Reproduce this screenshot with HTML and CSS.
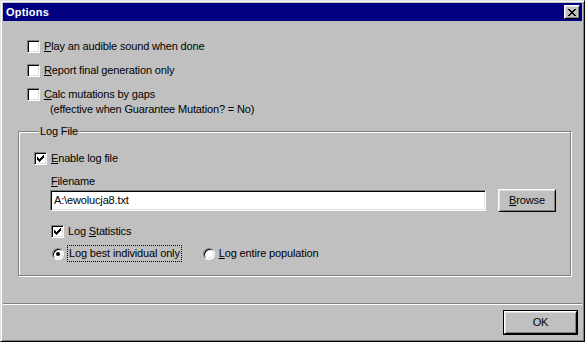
FILE: index.html
```html
<!doctype html>
<html lang="en">
<head>
    <meta charset="utf-8">
    <title>Options</title>
    <link rel="stylesheet" href="styles.css">
</head>
<body>
    <div class="window">
        <div class="titlebar">
            <span class="title">Options</span>
            <button class="close" type="button">
                <svg width="8" height="7" viewBox="0 0 8 7" shape-rendering="crispEdges">
                    <path d="M0 0h2v1H0zM6 0h2v1H6zM1 1h2v1H1zM5 1h2v1H5zM2 2h4v1H2zM3 3h2v1H3zM2 4h4v1H2zM1 5h2v1H1zM5 5h2v1H5zM0 6h2v1H0zM6 6h2v1H6z" fill="#000"/>
                </svg>
            </button>
        </div>

        <div class="content">
            <div class="options">
                <div class="check-row">
                    <span class="box"></span>
                    <span><u>P</u>lay an audible sound when done</span>
                </div>
                <div class="check-row">
                    <span class="box"></span>
                    <span><u>R</u>eport final generation only</span>
                </div>
                <div class="check-row">
                    <span class="box"></span>
                    <span><u>C</u>alc mutations by gaps</span>
                </div>
                <div class="note">(effective when Guarantee Mutation? = No)</div>
            </div>

            <div class="group">
                <div class="group-title">Log File</div>
                <div class="check-row">
                    <span class="box checked">
                        <svg width="7" height="7" viewBox="0 0 7 7" shape-rendering="crispEdges">
                            <path d="M6 0h1v1H6zM5 1h2v1H5zM0 2h1v1H0zM4 2h3v1H4zM0 3h2v1H0zM3 3h3v1H3zM0 4h5v1H0zM1 5h3v1H1zM2 6h1v1H2z" fill="#000"/>
                        </svg>
                    </span>
                    <span><u>E</u>nable log file</span>
                </div>
                <div class="file">
                    <div class="file-label"><u>F</u>ilename</div>
                    <div class="file-row">
                        <div class="edit">A:\ewolucja8.txt</div>
                        <button class="btn browse" type="button"><u>B</u>rowse</button>
                    </div>
                    <div class="check-row stats">
                        <span class="box checked">
                            <svg width="7" height="7" viewBox="0 0 7 7" shape-rendering="crispEdges">
                                <path d="M6 0h1v1H6zM5 1h2v1H5zM0 2h1v1H0zM4 2h3v1H4zM0 3h2v1H0zM3 3h3v1H3zM0 4h5v1H0zM1 5h3v1H1zM2 6h1v1H2z" fill="#000"/>
                            </svg>
                        </span>
                        <span>Log <u>S</u>tatistics</span>
                    </div>
                    <div class="radio-row">
                        <div class="radio-item first">
                            <span class="radio on"></span>
                            <span class="focus">Log best individual only</span>
                        </div>
                        <div class="radio-item">
                            <span class="radio"></span>
                            <span><u>L</u>og entire population</span>
                        </div>
                    </div>
                </div>
            </div>
        </div>

        <div class="separator"></div>

        <div class="footer">
            <button class="btn ok" type="button">OK</button>
        </div>
    </div>
</body>
</html>
```

FILE: styles.css
```css
* {
    box-sizing: border-box;
}
body {
    margin: 0;
    font-family: "Liberation Sans", Arial, sans-serif;
    font-size: 11px;
    line-height: 13px;
    letter-spacing: -0.15px;
    color: #000;
    background: #c0c0c0;
}
u {
    text-decoration: underline;
    text-underline-offset: 1px;
}
.window {
    width: 585px;
    height: 342px;
    background: #c0c0c0;
    border: 1px solid;
    border-color: #dfdfdf #000 #000 #dfdfdf;
    box-shadow: inset 1px 1px #fff, inset -1px -1px #808080;
    padding: 2px;
    display: flex;
    flex-direction: column;
}
.titlebar {
    height: 18px;
    background: #000080;
    display: flex;
    align-items: center;
    justify-content: space-between;
    padding: 0 2px 0 3px;
}
.title {
    color: #fff;
    font-weight: bold;
    font-size: 11px;
    letter-spacing: 0.2px;
}
.close {
    width: 16px;
    height: 14px;
    padding: 0;
    margin: 0;
    background: #c0c0c0;
    border: 1px solid;
    border-color: #fff #000 #000 #fff;
    box-shadow: inset 1px 1px #dfdfdf, inset -1px -1px #808080;
    display: flex;
    align-items: center;
    justify-content: center;
}
.close svg {
    display: block;
    margin-left: -1px;
}
.content {
    padding: 0 11px 0 15px;
}
.options {
    margin: 19px 0 0 9px;
    display: flex;
    flex-direction: column;
    gap: 11px;
}
.check-row {
    display: flex;
    align-items: center;
    gap: 4px;
    height: 13px;
}
.box {
    width: 13px;
    height: 13px;
    flex: none;
    background: #fff;
    border: 1px solid;
    border-color: #808080 #fff #fff #808080;
    box-shadow: inset 1px 1px #000, inset -1px -1px #dfdfdf;
    display: flex;
    align-items: center;
    justify-content: center;
}
.box svg {
    display: block;
}
.note {
    margin: -9px 0 0 23px;
}
.group {
    margin-top: 15px;
    border: 1px solid #808080;
    box-shadow: inset 1px 1px #fff, 1px 1px #fff;
    padding: 0 14px 14px 15px;
}
.group-title {
    width: fit-content;
    margin: -7px 0 0 5px;
    padding: 0 1px;
    background: #c0c0c0;
}
.group .check-row {
    margin-top: 14px;
}
.file {
    padding-left: 16px;
}
.file-label {
    margin-top: 10px;
    padding-left: 1px;
}
.file-row {
    margin-top: 1px;
    display: flex;
    align-items: center;
    gap: 12px;
}
.edit {
    flex: 1;
    height: 21px;
    background: #fff;
    border: 1px solid;
    border-color: #808080 #fff #fff #808080;
    box-shadow: inset 1px 1px #000, inset -1px -1px #dfdfdf;
    padding: 3px 0 0 3px;
}
.btn {
    font-family: inherit;
    font-size: 11px;
    line-height: 13px;
    letter-spacing: -0.15px;
    color: #000;
    background: #c0c0c0;
    border: 1px solid;
    border-color: #fff #000 #000 #fff;
    box-shadow: inset 1px 1px #dfdfdf, inset -1px -1px #808080;
    padding: 0;
    margin: 0;
}
.browse {
    width: 58px;
    height: 23px;
}
.group .check-row.stats {
    margin: 13px 0 0 1px;
}
.radio-row {
    margin-top: 8px;
    display: flex;
    gap: 20px;
}
.radio-item {
    display: flex;
    align-items: center;
    gap: 2px;
}
.radio {
    width: 12px;
    height: 12px;
    margin: 0 2px 0 2px;
    border-radius: 50%;
    background: #fff;
    border: 1px solid;
    border-color: #808080 #fff #fff #808080;
    box-shadow: inset 1px 1px #000, inset -1px -1px #dfdfdf;
    display: flex;
    align-items: center;
    justify-content: center;
}
.radio.on::after {
    content: "";
    width: 4px;
    height: 4px;
    border-radius: 50%;
    background: #000;
}
.focus {
    padding: 1px;
    outline: 1px dotted #000;
    outline-offset: 0;
}
.separator {
    margin-top: 27px;
    height: 2px;
    border-top: 1px solid #808080;
    border-bottom: 1px solid #fff;
}
.footer {
    display: flex;
    justify-content: flex-end;
    padding: 6px 5px 0 0;
}
.ok {
    width: 73px;
    height: 23px;
    outline: 1px solid #000;
    outline-offset: 0;
}
```
